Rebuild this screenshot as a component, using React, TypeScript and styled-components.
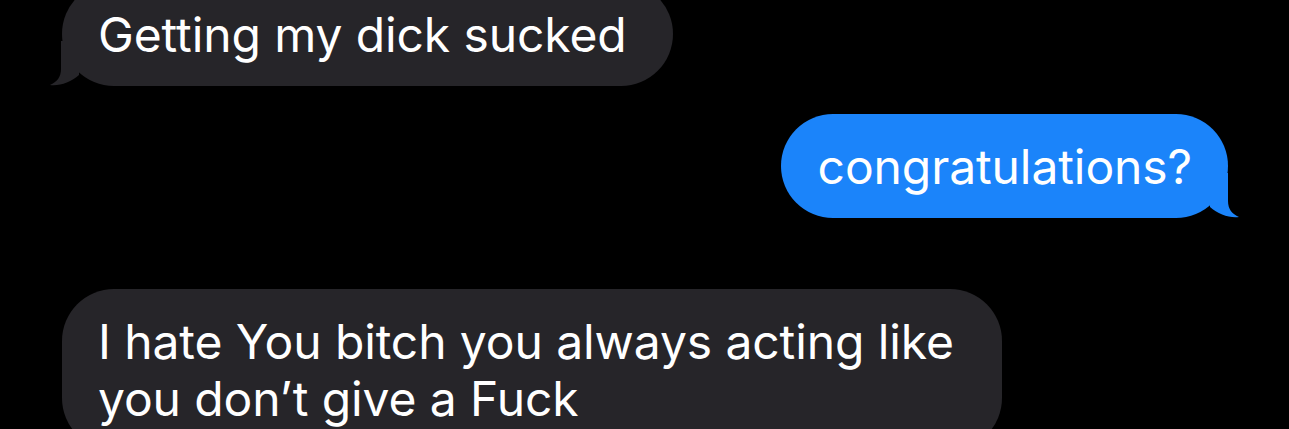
import * as React from 'react'
import styled, { createGlobalStyle } from 'styled-components'

const GlobalStyle = createGlobalStyle`
  html, body {
    margin: 0;
    padding: 0;
    background: #000;
    overflow: hidden;
  }
`

const grey = '#262529'
const blue = '#1b84fa'

const Thread = styled.div`
  width: 1289px;
  height: 429px;
  overflow: hidden;
  background: #000;
  font-family: Inter, 'Liberation Sans', sans-serif;
`

const List = styled.div`
  display: flex;
  flex-direction: column;
  margin-top: -18px;
  padding: 0 61px 0 62px;
`

const Row = styled.div<{ $out?: boolean; $gap: number }>`
  display: flex;
  justify-content: ${(p) => (p.$out ? 'flex-end' : 'flex-start')};
  margin-top: ${(p) => p.$gap}px;
`

const Bubble = styled.div<{ $out?: boolean }>`
  position: relative;
  background: ${(p) => (p.$out ? blue : grey)};
  color: #fff;
  font-size: 48px;
  line-height: 57px;
  letter-spacing: -0.1px;
  padding: ${(p) => (p.$out ? '24px 36px 23px 37px' : '24px 46px 23px 36px')};
  border-radius: 52px;
  max-width: 940px;
  box-sizing: border-box;
`

const Tail = styled.svg<{ $out?: boolean }>`
  position: absolute;
  bottom: 0;
  width: 42px;
  height: 45px;
  ${(p) => (p.$out ? 'right: -12px; transform: scaleX(-1);' : 'left: -13px;')}
`

const TailShape = ({ out }: { out?: boolean }) => (
  <Tail $out={out} viewBox="0 0 42 45">
    <path
      d="M12 0 L12 28 C12 36 8 41 1 44 C10 45.5 22 41 30 34 L30 0 Z"
      fill={out ? blue : grey}
    />
  </Tail>
)

const messages = [
  { text: 'Getting my dick sucked', out: false, gap: 0, tail: true },
  { text: 'congratulations?', out: true, gap: 28, tail: true },
  {
    text: 'I hate You bitch you always acting like you don\u2019t give a Fuck',
    out: false,
    gap: 71,
    tail: false,
  },
]

export default function App() {
  return (
    <Thread>
      <GlobalStyle />
      <List>
        {messages.map((m, i) => (
          <Row key={i} $out={m.out} $gap={m.gap}>
            <Bubble $out={m.out}>
              {m.text}
              {m.tail && <TailShape out={m.out} />}
            </Bubble>
          </Row>
        ))}
      </List>
    </Thread>
  )
}
